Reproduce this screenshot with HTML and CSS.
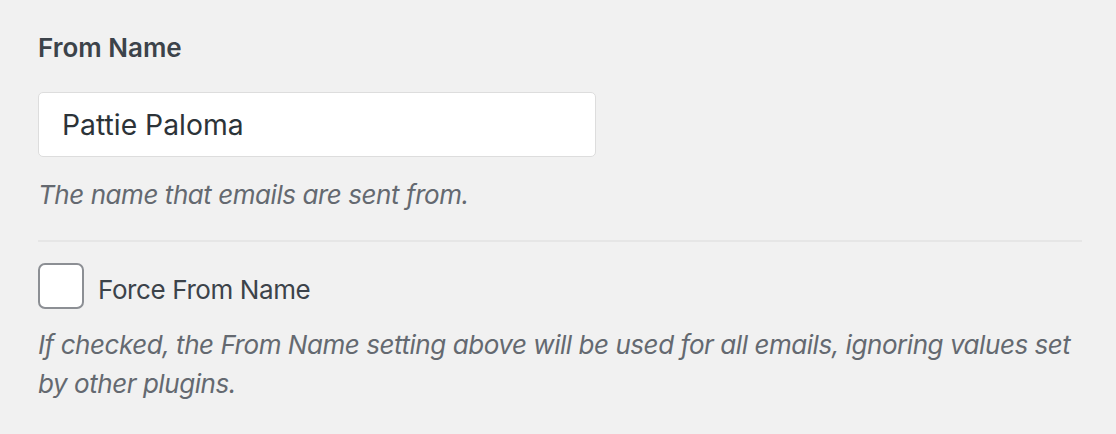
FILE: index.html
```html
<!DOCTYPE html>
<html lang="en">
<head>
<meta charset="utf-8">
<title>From Name</title>
<link rel="stylesheet" href="styles.css">
</head>
<body>
<div class="settings">
  <div class="field">
    <label class="field-label" for="from-name">From Name</label>
    <input class="text-input" id="from-name" type="text" value="Pattie Paloma">
    <p class="description">The name that emails are sent from.</p>
  </div>
  <hr class="divider">
  <div class="field">
    <div class="check-row">
      <span class="checkbox" role="checkbox" aria-checked="false"></span>
      <span class="check-label">Force From Name</span>
    </div>
    <p class="description desc-after-check">If checked, the From Name setting above will be used for all emails, ignoring values set by other plugins.</p>
  </div>
</div>
</body>
</html>
```

FILE: styles.css
```css
html, body {
  margin: 0;
  padding: 0;
  background: #f1f1f1;
}

body {
  font-family: Inter, "Noto Sans", "Liberation Sans", sans-serif;
  color: #3c434a;
}

.settings {
  padding: 28px 34px 0 38px;
}

.field {
  display: flex;
  flex-direction: column;
  align-items: flex-start;
}

.field-label {
  font-size: 26px;
  line-height: 39px;
  font-weight: 600;
  color: #3c434a;
}

.text-input {
  box-sizing: border-box;
  margin: 25px 0 0 0;
  width: 558px;
  height: 65px;
  padding: 0 0 0 23px;
  border: 1px solid #dddddd;
  border-radius: 5px;
  background: #ffffff;
  font-family: inherit;
  font-size: 28.3px;
  color: #2c3338;
  outline: none;
}

.description {
  margin: 18px 0 0 0;
  font-size: 26px;
  line-height: 39px;
  font-style: italic;
  letter-spacing: -0.45px;
  color: #646970;
}

.divider {
  margin: 26px 0 0 0;
  border: 0;
  height: 2px;
  background: #e6e6e6;
}

.check-row {
  margin-top: 21px;
  display: flex;
  align-items: flex-start;
  gap: 14px;
}

.checkbox {
  box-sizing: border-box;
  width: 46px;
  height: 46px;
  border: 2px solid #8c8f94;
  border-radius: 7px;
  background: #ffffff;
}

.check-label {
  margin-top: 7px;
  font-size: 26px;
  line-height: 39px;
  letter-spacing: -0.4px;
  color: #3c434a;
}

.desc-after-check {
  margin-top: 16px;
}
```
